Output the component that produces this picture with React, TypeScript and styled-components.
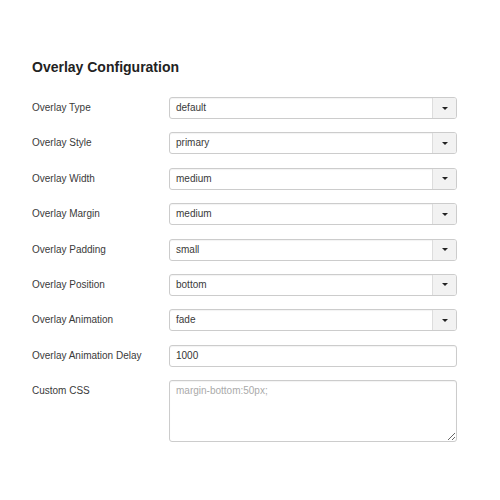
import React from 'react'
import styled, { createGlobalStyle } from 'styled-components'

const GlobalStyle = createGlobalStyle`
    html, body {
        margin: 0;
        padding: 0;
        background: #ffffff;
    }
    body {
        font-family: "Liberation Sans", Arial, sans-serif;
    }
`

const Page = styled.div`
    width: 500px;
    height: 500px;
    box-sizing: border-box;
    padding: 59px 43px 0 32px;
    background: #ffffff;
`

const Title = styled.h2`
    margin: 0 0 22px 0;
    font-size: 14px;
    line-height: 16px;
    font-weight: 700;
    color: #222;
`

const Form = styled.div`
    display: grid;
    grid-template-columns: 137px 288px;
    row-gap: 13.4px;
    align-items: start;
`

const Label = styled.label`
    font-size: 10px;
    line-height: 22px;
    color: #3a3a3a;
`

const SelectBox = styled.div`
    display: flex;
    height: 22px;
    box-sizing: border-box;
    border: 1px solid #ccc;
    border-radius: 3px;
    background: #fff;
    box-shadow: inset 0 1px 1px rgba(0, 0, 0, 0.05);
    overflow: hidden;
`

const Value = styled.div`
    flex: 1;
    padding: 0 6px;
    font-size: 10px;
    line-height: 20px;
    color: #3a3a3a;
`

const Caret = styled.div`
    width: 23px;
    border-left: 1px solid #ddd;
    background: #f2f2f2;
    display: flex;
    align-items: center;
    justify-content: center;

    &::after {
        content: '';
        width: 0;
        height: 0;
        border-left: 3px solid transparent;
        border-right: 3px solid transparent;
        border-top: 3px solid #222;
    }
`

const TextInput = styled.input`
    height: 22px;
    box-sizing: border-box;
    border: 1px solid #ccc;
    border-radius: 3px;
    padding: 0 6px;
    font-family: "Liberation Sans", Arial, sans-serif;
    font-size: 10px;
    color: #333;
    outline: none;
    box-shadow: inset 0 1px 1px rgba(0, 0, 0, 0.05);
`

const TextArea = styled.textarea`
    height: 62px;
    box-sizing: border-box;
    border: 1px solid #ccc;
    border-radius: 3px;
    padding: 4px 6px;
    font-family: "Liberation Sans", Arial, sans-serif;
    font-size: 10px;
    color: #333;
    resize: vertical;
    outline: none;
    box-shadow: inset 0 1px 1px rgba(0, 0, 0, 0.05);

    &::placeholder {
        color: #aaa;
    }
`

const selects = [
    { label: 'Overlay Type', value: 'default' },
    { label: 'Overlay Style', value: 'primary' },
    { label: 'Overlay Width', value: 'medium' },
    { label: 'Overlay Margin', value: 'medium' },
    { label: 'Overlay Padding', value: 'small' },
    { label: 'Overlay Position', value: 'bottom' },
    { label: 'Overlay Animation', value: 'fade' },
]

const App = () => {
    return (
        <>
            <GlobalStyle />
            <Page>
                <Title>Overlay Configuration</Title>
                <Form>
                    {selects.map((s) => (
                        <React.Fragment key={s.label}>
                            <Label>{s.label}</Label>
                            <SelectBox>
                                <Value>{s.value}</Value>
                                <Caret />
                            </SelectBox>
                        </React.Fragment>
                    ))}
                    <Label>Overlay Animation Delay</Label>
                    <TextInput defaultValue='1000' />
                    <Label>Custom CSS</Label>
                    <TextArea placeholder='margin-bottom:50px;' />
                </Form>
            </Page>
        </>
    )
}

export default App
